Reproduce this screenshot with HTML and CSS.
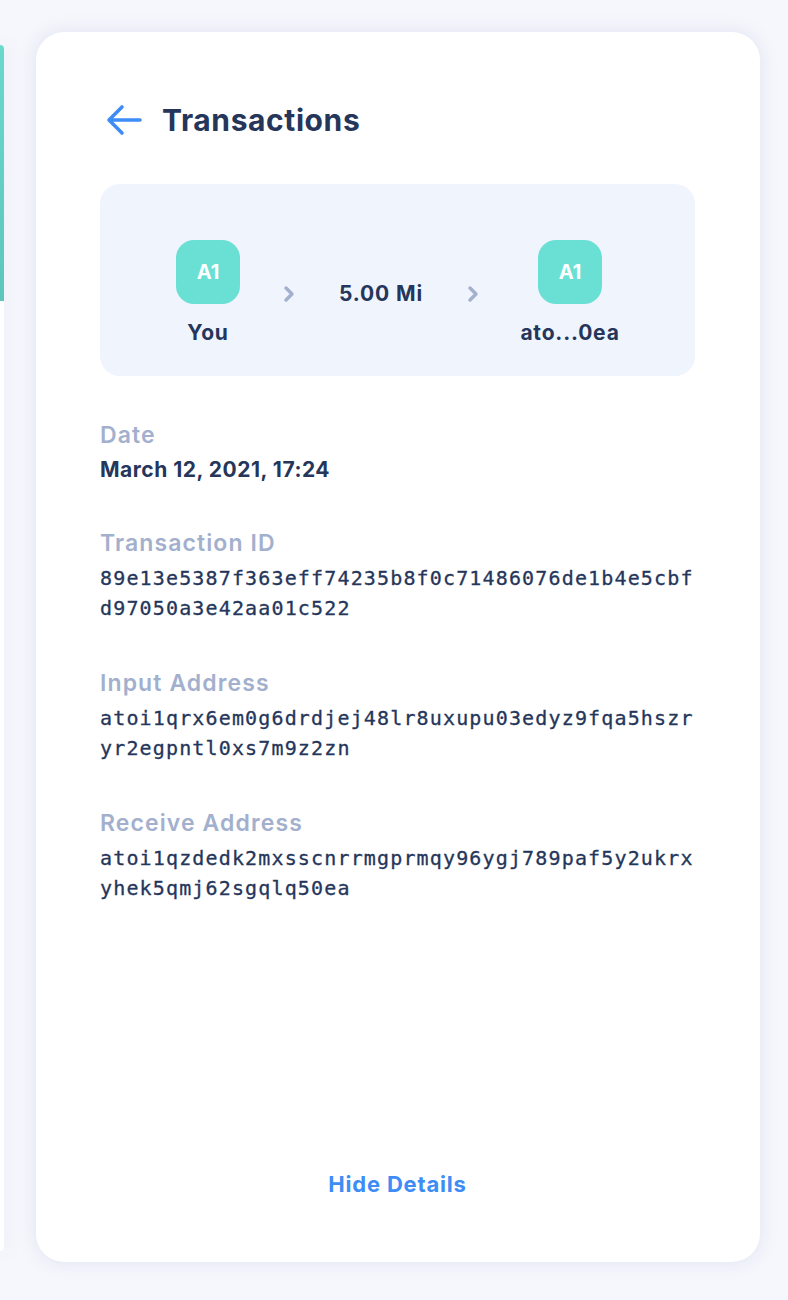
FILE: index.html
```html
<!DOCTYPE html>
<html lang="en">
<head>
<meta charset="utf-8">
<title>Transactions</title>
<link rel="stylesheet" href="styles.css">
</head>
<body>
<div class="page">
  <div class="side-card">
    <div class="side-top"></div>
  </div>
  <main class="card">
    <header class="head">
      <svg class="back" width="38" height="34" viewBox="0 0 38 34" aria-hidden="true">
        <path d="M35 17 H4 M17 4 L4 17 L17 30" fill="none" stroke="#3e8cf6" stroke-width="3.6" stroke-linecap="round" stroke-linejoin="round"/>
      </svg>
      <h1 class="title">Transactions</h1>
    </header>

    <section class="summary">
      <div class="party">
        <div class="avatar">A1</div>
        <div class="name">You</div>
      </div>
      <svg class="chev" width="14" height="20" viewBox="0 0 14 20" aria-hidden="true">
        <path d="M4 4 L10 10 L4 16" fill="none" stroke="#a3b0cd" stroke-width="3.4" stroke-linecap="round" stroke-linejoin="round"/>
      </svg>
      <div class="amount">5.00 Mi</div>
      <svg class="chev" width="14" height="20" viewBox="0 0 14 20" aria-hidden="true">
        <path d="M4 4 L10 10 L4 16" fill="none" stroke="#a3b0cd" stroke-width="3.4" stroke-linecap="round" stroke-linejoin="round"/>
      </svg>
      <div class="party party-wide">
        <div class="avatar">A1</div>
        <div class="name">ato...0ea</div>
      </div>
    </section>

    <section class="details">
      <div class="field field-first">
        <div class="label">Date</div>
        <div class="value">March 12, 2021, 17:24</div>
      </div>
      <div class="field">
        <div class="label">Transaction ID</div>
        <div class="mono">89e13e5387f363eff74235b8f0c71486076de1b4e5cbfd97050a3e42aa01c522</div>
      </div>
      <div class="field">
        <div class="label">Input Address</div>
        <div class="mono">atoi1qrx6em0g6drdjej48lr8uxupu03edyz9fqa5hszryr2egpntl0xs7m9z2zn</div>
      </div>
      <div class="field">
        <div class="label">Receive Address</div>
        <div class="mono">atoi1qzdedk2mxsscnrrmgprmqy96ygj789paf5y2ukrxyhek5qmj62sgqlq50ea</div>
      </div>
    </section>

    <footer class="foot">
      <a class="hide" href="#">Hide Details</a>
    </footer>
  </main>
</div>
</body>
</html>
```

FILE: styles.css
```css
* { box-sizing: border-box; }

html, body {
  margin: 0;
  padding: 0;
  background: #f6f7fc;
}

body {
  font-family: Inter, "Noto Sans", "DejaVu Sans", sans-serif;
  color: #25365a;
}

.page {
  display: flex;
  align-items: flex-start;
  gap: 32px;
  height: 1300px;
  padding: 32px 0 38px 0;
  overflow: hidden;
}

.side-card {
  flex: 0 0 4px;
  height: 1206px;
  margin-top: 13px;
  background: #ffffff;
  border-radius: 0 12px 12px 0;
  box-shadow: 0 0 18px rgba(196, 202, 230, 0.45);
  overflow: hidden;
}

.side-top {
  height: 256px;
  background: linear-gradient(180deg, #6adacd 0%, #5cc6bb 100%);
}

.card {
  flex: 0 0 724px;
  height: 1230px;
  background: #ffffff;
  border-radius: 28px;
  box-shadow: 0 0 18px rgba(196, 202, 230, 0.45);
  padding: 68px 65px 61px 64px;
  display: flex;
  flex-direction: column;
}

.head {
  display: flex;
  align-items: center;
  height: 40px;
  gap: 19px;
  padding-left: 5px;
}

.back { display: block; flex: 0 0 auto; }

.title {
  margin: 0;
  font-size: 30px;
  font-weight: 700;
  letter-spacing: 0.6px;
  color: #25365a;
  line-height: 40px;
}

.summary {
  margin-top: 44px;
  height: 192px;
  background: #eff4fd;
  border-radius: 20px;
  display: flex;
  align-items: center;
  gap: 42px;
  padding: 27px 0 0 76px;
}

.party {
  width: 64px;
  display: flex;
  flex-direction: column;
  align-items: center;
}

.party-wide {
  width: 100px;
  margin-left: -2px;
}

.avatar {
  width: 64px;
  height: 64px;
  border-radius: 18px;
  background: #6ae0d5;
  color: #ffffff;
  font-weight: 700;
  font-size: 20px;
  display: flex;
  align-items: center;
  justify-content: center;
  letter-spacing: 0;
}

.name {
  margin-top: 15px;
  font-size: 21px;
  font-weight: 700;
  line-height: 28px;
  white-space: nowrap;
  color: #25365a;
  letter-spacing: 0.8px;
}

.chev { display: block; flex: 0 0 14px; }

.amount {
  width: 86px;
  text-align: center;
  font-size: 21px;
  font-weight: 700;
  white-space: nowrap;
  color: #25365a;
  letter-spacing: 0.9px;
}

.details {
  margin-top: 44px;
  display: flex;
  flex-direction: column;
  gap: 45px;
}

.field-first { margin-bottom: -2px; }

.label {
  font-size: 23px;
  font-weight: 600;
  line-height: 30px;
  color: #a3b0cd;
  letter-spacing: 1.1px;
}

.value {
  margin-top: 5px;
  font-size: 21px;
  font-weight: 700;
  line-height: 30px;
  color: #25365a;
  letter-spacing: 0.5px;
}

.mono {
  margin-top: 5px;
  font-family: "DejaVu Sans Mono", "Liberation Mono", monospace;
  font-size: 20px;
  letter-spacing: 1.15px;
  line-height: 30px;
  color: #25365a;
  -webkit-text-stroke: 0.3px #25365a;
  word-break: break-all;
}

.foot {
  margin-top: auto;
  text-align: center;
  line-height: 30px;
}

.hide {
  font-size: 22px;
  font-weight: 700;
  color: #3e8cf6;
  text-decoration: none;
  letter-spacing: 0.8px;
}
```
